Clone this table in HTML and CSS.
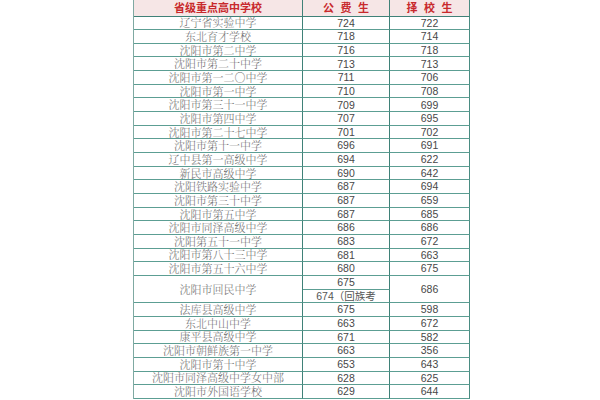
FILE: index.html
```html
<!DOCTYPE html>
<html lang="zh-CN">
<head>
<meta charset="utf-8">
<title>省级重点高中学校</title>
<link rel="stylesheet" href="styles.css">
</head>
<body>
<div class="sheet">
  <div class="grid">
    <div class="c hd name">省级重点高中学校</div>
    <div class="c hd wide">公 费 生</div>
    <div class="c hd wide last">择 校 生</div>

    <div class="c name">辽宁省实验中学</div><div class="c num">724</div><div class="c num last">722</div>
    <div class="c name">东北育才学校</div><div class="c num">718</div><div class="c num last">714</div>
    <div class="c name">沈阳市第二中学</div><div class="c num">716</div><div class="c num last">718</div>
    <div class="c name">沈阳市第二十中学</div><div class="c num">713</div><div class="c num last">713</div>
    <div class="c name">沈阳市第一二○中学</div><div class="c num">711</div><div class="c num last">706</div>
    <div class="c name">沈阳市第一中学</div><div class="c num">710</div><div class="c num last">708</div>
    <div class="c name">沈阳市第三十一中学</div><div class="c num">709</div><div class="c num last">699</div>
    <div class="c name">沈阳市第四中学</div><div class="c num">707</div><div class="c num last">695</div>
    <div class="c name">沈阳市第二十七中学</div><div class="c num">701</div><div class="c num last">702</div>
    <div class="c name">沈阳市第十一中学</div><div class="c num">696</div><div class="c num last">691</div>
    <div class="c name">辽中县第一高级中学</div><div class="c num">694</div><div class="c num last">622</div>
    <div class="c name">新民市高级中学</div><div class="c num">690</div><div class="c num last">642</div>
    <div class="c name">沈阳铁路实验中学</div><div class="c num">687</div><div class="c num last">694</div>
    <div class="c name">沈阳市第三十中学</div><div class="c num">687</div><div class="c num last">659</div>
    <div class="c name">沈阳市第五中学</div><div class="c num">687</div><div class="c num last">685</div>
    <div class="c name">沈阳市同泽高级中学</div><div class="c num">686</div><div class="c num last">686</div>
    <div class="c name">沈阳第五十一中学</div><div class="c num">683</div><div class="c num last">672</div>
    <div class="c name">沈阳市第八十三中学</div><div class="c num">681</div><div class="c num last">663</div>
    <div class="c name">沈阳市第五十六中学</div><div class="c num">680</div><div class="c num last">675</div>

    <div class="c name span2">沈阳市回民中学</div>
    <div class="c num">675</div>
    <div class="c num last span2 col3">686</div>
    <div class="c num sub">674（回族考</div>

    <div class="c name">法库县高级中学</div><div class="c num">675</div><div class="c num last">598</div>
    <div class="c name">东北中山中学</div><div class="c num">663</div><div class="c num last">672</div>
    <div class="c name">康平县高级中学</div><div class="c num">671</div><div class="c num last">582</div>
    <div class="c name">沈阳市朝鲜族第一中学</div><div class="c num">663</div><div class="c num last">356</div>
    <div class="c name">沈阳市第十中学</div><div class="c num">653</div><div class="c num last">643</div>
    <div class="c name">沈阳市同泽高级中学女中部</div><div class="c num">628</div><div class="c num last">625</div>
    <div class="c name">沈阳市外国语学校</div><div class="c num">629</div><div class="c num last">644</div>
  </div>
</div>
</body>
</html>
```
FILE: styles.css
```css
html, body {
  margin: 0;
  padding: 0;
  background: #ffffff;
}
.sheet {
  width: 600px;
  height: 400px;
  overflow: hidden;
  padding-left: 133px;
  box-sizing: border-box;
}
.grid {
  display: grid;
  grid-template-columns: 169px 87px 80px;
  grid-template-rows: 16.5px;
  grid-auto-rows: 13.66px;
  border-left: 1px solid #7fa9a2;
  width: 337px;
}
.c {
  display: flex;
  align-items: center;
  justify-content: center;
  border-right: 1px solid #3f8178;
  border-bottom: 1px solid #5c9e93;
  box-sizing: border-box;
  overflow: hidden;
  white-space: nowrap;
  background: #ffffff;
  line-height: 1;
}
.c.last {
  border-right: 1px solid #4a8c82;
}
.hd {
  background: #f6e6e6;
  color: #c8292c;
  font-family: "Noto Sans CJK SC", sans-serif;
  font-weight: bold;
  font-size: 11px;
  border-bottom: 1px solid #3f8178;
}
.hd.wide {
  letter-spacing: 2px;
  padding-left: 2px;
}
.name {
  font-family: "Noto Serif CJK SC", "Noto Sans CJK SC", serif;
  font-size: 11px;
  color: #6e6e6e;
  font-weight: 300;
}
.hd.name {
  font-family: "Noto Sans CJK SC", sans-serif;
  color: #c8292c;
  font-weight: bold;
}
.num {
  font-family: "Liberation Sans", "Noto Sans CJK SC", sans-serif;
  font-size: 10.5px;
  color: #474747;
}
.sub {
  color: #555555;
}
.span2 {
  grid-row: span 2;
}
.col3 {
  grid-column: 3;
}
```
